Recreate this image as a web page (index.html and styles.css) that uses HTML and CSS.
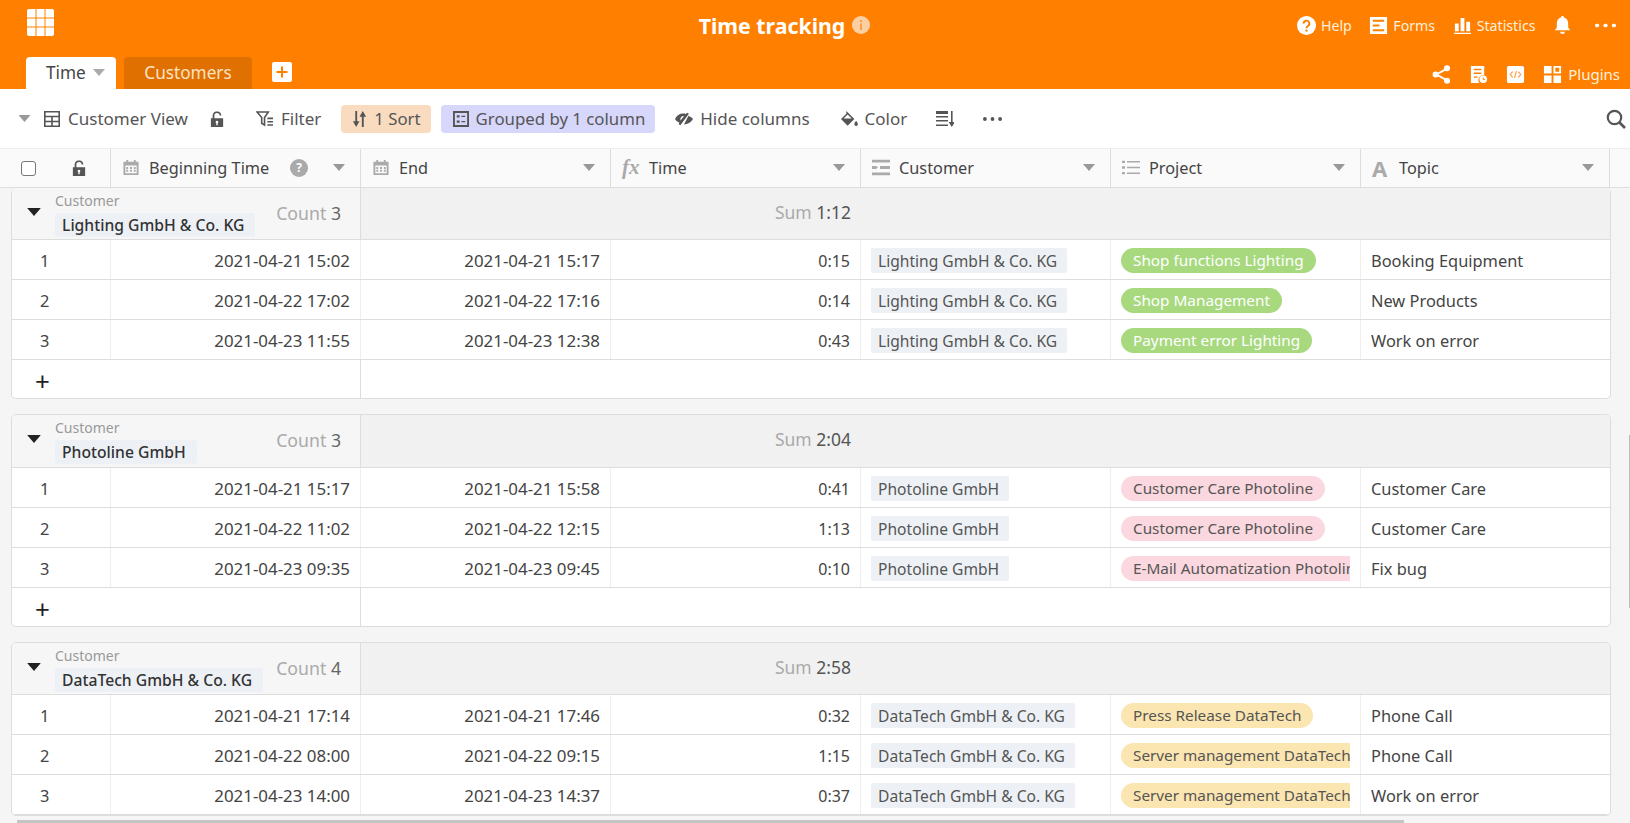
FILE: index.html
```html
<!DOCTYPE html>
<html lang="en">
<head>
  <meta charset="UTF-8">
  <meta name="viewport" content="width=device-width, initial-scale=1.0">
  <title>Time tracking</title>
  <link rel="stylesheet" href="styles.css">
</head>
<body>
  <svg class="sprite" xmlns="http://www.w3.org/2000/svg">
    <symbol id="i-cal" viewBox="0 0 18 18"><path fill="currentColor" d="M4 1h2v2h6V1h2v2h3v14H1V3h3zM3 7v8h12V7zm1 1.500h2v2H4zm4 0h2v2H8zm4 0h2v2h-2zm-8 3h2v2H4zm4 0h2v2H8zm4 0h2v2h-2z" fill-rule="evenodd"/></symbol>
    <symbol id="i-lock" viewBox="0 0 16 18"><path fill="currentColor" fill-rule="evenodd" d="M1 8h2V5a5 5 0 0 1 10 0H11a3 3 0 0 0-6 0v3h10v10H1zm7 3a1.500 1.500 0 0 0-.8 2.800V16h1.600v-2.200A1.500 1.500 0 0 0 8 11z"/></symbol>
    <symbol id="i-caret" viewBox="0 0 12 7"><path fill="currentColor" d="M0 0h12L6 7z"/></symbol>
    <symbol id="i-customer" viewBox="0 0 18 16"><path fill="currentColor" d="M0 0h18v3H0zM0 6.500h4L6 8 4 9.500H0zM8 6.500h10v3H8zM0 13h18v3H0z"/></symbol>
    <symbol id="i-list" viewBox="0 0 18 14"><path fill="currentColor" d="M0 0h3v2.500H0zM5 .5h13v1.500H5zM0 5.700h3v2.500H0zM5 6.200h13v1.500H5zM0 11.400h3v2.500H0zM5 11.900h13v1.500H5z"/></symbol>
    <symbol id="i-dots" viewBox="0 0 20 4"><circle cx="2" cy="2" r="2" fill="currentColor"/><circle cx="10" cy="2" r="2" fill="currentColor"/><circle cx="18" cy="2" r="2" fill="currentColor"/></symbol>
  </svg>

  <div id="page">
    <header class="app-head">
      <div class="top-row">
        <svg class="logo" viewBox="0 0 27 27"><path fill="#fff" d="M0 2a2 2 0 0 1 2-2h6.500v8.500H0zM9.500 0h8v8.500h-8zM18.500 0H25a2 2 0 0 1 2 2v6.500h-8.500zM0 9.500h8.500v8H0zM9.500 9.500h8v8h-8zM18.500 9.500H27v8h-8.500zM0 18.500h8.500V27H2a2 2 0 0 1-2-2zM9.500 18.500h8V27h-8zM18.500 18.500H27V25a2 2 0 0 1-2 2h-6.500z"/></svg>
        <div class="title">
          <span>Time tracking</span>
          <svg class="info" viewBox="0 0 18 18"><circle cx="9" cy="9" r="9" fill="#fbcfa4"/><path fill="#ff9c3d" d="M8 4h2v2H8zM8 7.500h2V14H8z"/></svg>
        </div>
        <nav class="top-links">
          <a class="top-link"><svg class="ico20" viewBox="0 0 20 20"><circle cx="10" cy="10" r="10" fill="#fff"/><path fill="none" stroke="#ff8000" stroke-width="2" d="M7 8a3 3 0 1 1 4.500 2.500c-1 .6-1.500 1-1.500 2.300"/><circle cx="10" cy="15.500" r="1.200" fill="#ff8000"/></svg>Help</a>
          <a class="top-link"><svg class="ico20" viewBox="0 0 20 20"><path fill="#fff" fill-rule="evenodd" d="M1 1h18v18H1zM4 4v2h12V4zm0 5v2h7V9zm0 5v2h12v-2z"/></svg>Forms</a>
          <a class="top-link"><svg class="ico20" viewBox="0 0 20 20"><path fill="#fff" d="M2 8h4v8H2zM8 2h4v14H8zM14 6h4v10h-4zM1 17.500h18V19H1z"/></svg>Statistics</a>
          <svg class="ico20 bell" viewBox="0 0 20 20"><path fill="#fff" d="M10 0a1.500 1.500 0 0 1 1.500 1.700C14.500 2.500 16 5 16 8v4l2 3H2l2-3V8c0-3 1.500-5.500 4.500-6.300A1.500 1.500 0 0 1 10 0zM7.500 16.500h5a2.500 2.500 0 0 1-5 0z"/></svg>
          <svg class="more" viewBox="0 0 20 4"><use href="#i-dots"/></svg>
        </nav>
      </div>
      <div class="tab-row">
        <div class="tab tab-active">Time<svg class="caret" viewBox="0 0 12 7"><use href="#i-caret"/></svg></div>
        <div class="tab tab-other">Customers</div>
        <div class="tab-add"><svg viewBox="0 0 20 20"><path fill="#ff8000" d="M9 4.500h2V9h4.500v2H11v4.500H9V11H4.500V9H9z"/></svg></div>
        <div class="tab-tools">
          <svg class="ico20" viewBox="0 0 20 20"><path fill="none" stroke="#fff" stroke-width="2" d="M15.500 4 4.500 10l11 6"/><circle cx="15.800" cy="3.500" r="3.200" fill="#fff"/><circle cx="3.800" cy="10" r="3.200" fill="#fff"/><circle cx="15.800" cy="16.500" r="3.200" fill="#fff"/></svg>
          <svg class="ico20" viewBox="0 0 20 20"><path fill="#fff" fill-rule="evenodd" d="M2 1h14v10a5 5 0 0 0-5 8H2zm3 3v1.500h8V4zm0 4v1.500h8V8zm0 4v1.500h4V12z"/><circle cx="15" cy="15" r="4" fill="#fff"/><path fill="none" stroke="#ff8000" stroke-width="1" d="M15 13v2.300h1.800"/></svg>
          <svg class="ico20" viewBox="0 0 20 20"><rect x="1" y="1" width="18" height="18" rx="2" fill="#fff"/><path fill="none" stroke="#ff9c3d" stroke-width="1.200" d="M7 7 4.500 10 7 13M13 7l2.500 3-2.500 3M11 6.500 9 13.500"/></svg>
          <a class="top-link"><svg class="ico20" viewBox="0 0 20 20"><path fill="#fff" fill-rule="evenodd" d="M1 1h8v8H1zM11 1h8v8h-8zm2 2v4h4V3zM1 11h8v8H1zM11 11h8v8h-8z"/></svg>Plugins</a>
        </div>
      </div>
    </header>

    <div class="toolbar">
      <svg class="tb-caret" viewBox="0 0 12 7"><use href="#i-caret"/></svg>
      <svg class="tb-table" viewBox="0 0 16 16"><path fill="none" stroke="currentColor" stroke-width="1.600" d="M.8.800h14.400v14.400H.8zM.8 5.500h14.400M.8 10.500h14.400M8 5.500v9.700"/></svg>
      <span class="tb-view">Customer View</span>
      <svg class="tb-lock" viewBox="0 0 16 18"><use href="#i-lock"/></svg>
      <span class="tb-item tb-filter"><svg class="tb-ico" viewBox="0 0 19 17"><path fill="none" stroke="currentColor" stroke-width="1.700" d="M1 1h12L9 7v8L6 13V7z"/><path fill="currentColor" d="M12 7h6v1.700h-6zM12 10.500h6v1.700h-6zM12 14h6v1.700h-6z"/></svg>Filter</span>
      <span class="tb-item tb-pill pill-sort"><svg class="tb-ico" viewBox="0 0 15 17"><path fill="currentColor" d="M3 0h2v11h2.500L4 17 .5 11H3zM10 17h2V6h2.500L11 0 7.500 6H10z"/></svg>1 Sort</span>
      <span class="tb-item tb-pill pill-group"><svg class="tb-ico" viewBox="0 0 17 17"><path fill="currentColor" fill-rule="evenodd" d="M0 0h17v17H0zm2 2v13h13V2zm2 2.500h3v2.500H4zm5 .5h4v1.500H9zm-5 5h3v2.500H4zm5 .5h4V12H9z"/></svg>Grouped by 1 column</span>
      <span class="tb-item tb-hide"><svg class="tb-ico" viewBox="0 0 20 14"><path fill="currentColor" fill-rule="evenodd" d="M0 7c2-4 5.500-6 9-6 1 0 2 .2 3 .5L13.500 0l2 1.200L6 14l-2-1.300 1-1.500C3 10.300 1 9 0 7zm10-3.200a3.500 3.500 0 0 0-3.800 4.800zM15 3.500c2 1 4 2 5 3.500-2 4-6 6-10 6z"/></svg>Hide columns</span>
      <span class="tb-item tb-color"><svg class="tb-ico" viewBox="0 0 20 18"><path fill="currentColor" fill-rule="evenodd" d="M7 0l1.500 1.500L16 9l-7.500 7.500L1 9l6-6zM8.500 4 4 8.500h9z"/><path fill="currentColor" d="M18 11c1 1.500 2 2.700 2 4a2 2 0 0 1-4 0c0-1.300 1-2.500 2-4z"/></svg>Color</span>
      <svg class="tb-rows" viewBox="0 0 18 16"><path fill="currentColor" d="M0 0h12v3H0zM0 5h12v1.600H0zM0 9h12v1.600H0zM0 13.400h12V15H0zM15 0h1.600v11H19l-3.200 5-3.200-5h2.400z"/></svg>
      <svg class="tb-dots" viewBox="0 0 20 4"><use href="#i-dots"/></svg>
      <svg class="tb-search" viewBox="0 0 20 20"><circle cx="8.500" cy="8.500" r="6.700" fill="none" stroke="currentColor" stroke-width="2.200"/><path stroke="currentColor" stroke-width="2.600" d="m13.500 13.500 5.500 5.500"/></svg>
    </div>

    <div class="col-head">
      <div class="ch-first"><span class="checkbox"></span><svg class="ch-lock" viewBox="0 0 16 18"><use href="#i-lock"/></svg></div>
      <div class="ch"><svg class="ch-ico" viewBox="0 0 18 18"><use href="#i-cal"/></svg><span class="ch-name">Beginning Time</span><span class="ch-help">?</span><svg class="caret" viewBox="0 0 12 7"><use href="#i-caret"/></svg></div>
      <div class="ch"><svg class="ch-ico" viewBox="0 0 18 18"><use href="#i-cal"/></svg><span class="ch-name">End</span><svg class="caret" viewBox="0 0 12 7"><use href="#i-caret"/></svg></div>
      <div class="ch"><i class="ch-fx">fx</i><span class="ch-name">Time</span><svg class="caret" viewBox="0 0 12 7"><use href="#i-caret"/></svg></div>
      <div class="ch"><svg class="ch-ico" viewBox="0 0 18 16"><use href="#i-customer"/></svg><span class="ch-name">Customer</span><svg class="caret" viewBox="0 0 12 7"><use href="#i-caret"/></svg></div>
      <div class="ch"><svg class="ch-ico" viewBox="0 0 18 14"><use href="#i-list"/></svg><span class="ch-name">Project</span><svg class="caret" viewBox="0 0 12 7"><use href="#i-caret"/></svg></div>
      <div class="ch"><b class="ch-a">A</b><span class="ch-name">Topic</span><svg class="caret" viewBox="0 0 12 7"><use href="#i-caret"/></svg></div>
    </div>

    <main class="groups">
      <section class="group">
        <div class="g-head">
          <div class="g-left">
            <svg class="g-caret" viewBox="0 0 12 7"><use href="#i-caret"/></svg>
            <div class="g-label"><small>Customer</small><span class="g-chip">Lighting GmbH &amp; Co. KG</span></div>
            <div class="g-count"><em>Count</em> 3</div>
          </div>
          <div class="g-sum"><em>Sum</em> 1:12</div>
        </div>
        <div class="row"><div class="c c-no">1</div><div class="c c-date">2021-04-21 15:02</div><div class="c c-date">2021-04-21 15:17</div><div class="c c-time">0:15</div><div class="c"><span class="chip">Lighting GmbH &amp; Co. KG</span></div><div class="c"><div class="clip"><span class="pill green">Shop functions Lighting</span></div></div><div class="c c-last">Booking Equipment</div></div>
        <div class="row"><div class="c c-no">2</div><div class="c c-date">2021-04-22 17:02</div><div class="c c-date">2021-04-22 17:16</div><div class="c c-time">0:14</div><div class="c"><span class="chip">Lighting GmbH &amp; Co. KG</span></div><div class="c"><div class="clip"><span class="pill green">Shop Management</span></div></div><div class="c c-last">New Products</div></div>
        <div class="row"><div class="c c-no">3</div><div class="c c-date">2021-04-23 11:55</div><div class="c c-date">2021-04-23 12:38</div><div class="c c-time">0:43</div><div class="c"><span class="chip">Lighting GmbH &amp; Co. KG</span></div><div class="c"><div class="clip"><span class="pill green">Payment error Lighting</span></div></div><div class="c c-last">Work on error</div></div>
        <div class="add-row"><div class="add-cell">+</div></div>
      </section>

      <section class="group group-tall">
        <div class="g-head">
          <div class="g-left">
            <svg class="g-caret" viewBox="0 0 12 7"><use href="#i-caret"/></svg>
            <div class="g-label"><small>Customer</small><span class="g-chip">Photoline GmbH</span></div>
            <div class="g-count"><em>Count</em> 3</div>
          </div>
          <div class="g-sum"><em>Sum</em> 2:04</div>
        </div>
        <div class="row"><div class="c c-no">1</div><div class="c c-date">2021-04-21 15:17</div><div class="c c-date">2021-04-21 15:58</div><div class="c c-time">0:41</div><div class="c"><span class="chip">Photoline GmbH</span></div><div class="c"><div class="clip"><span class="pill pink">Customer Care Photoline</span></div></div><div class="c c-last">Customer Care</div></div>
        <div class="row"><div class="c c-no">2</div><div class="c c-date">2021-04-22 11:02</div><div class="c c-date">2021-04-22 12:15</div><div class="c c-time">1:13</div><div class="c"><span class="chip">Photoline GmbH</span></div><div class="c"><div class="clip"><span class="pill pink">Customer Care Photoline</span></div></div><div class="c c-last">Customer Care</div></div>
        <div class="row"><div class="c c-no">3</div><div class="c c-date">2021-04-23 09:35</div><div class="c c-date">2021-04-23 09:45</div><div class="c c-time">0:10</div><div class="c"><span class="chip">Photoline GmbH</span></div><div class="c"><div class="clip"><span class="pill pink">E-Mail Automatization Photoline</span></div></div><div class="c c-last">Fix bug</div></div>
        <div class="add-row"><div class="add-cell">+</div></div>
      </section>

      <section class="group">
        <div class="g-head">
          <div class="g-left">
            <svg class="g-caret" viewBox="0 0 12 7"><use href="#i-caret"/></svg>
            <div class="g-label"><small>Customer</small><span class="g-chip">DataTech GmbH &amp; Co. KG</span></div>
            <div class="g-count"><em>Count</em> 4</div>
          </div>
          <div class="g-sum"><em>Sum</em> 2:58</div>
        </div>
        <div class="row"><div class="c c-no">1</div><div class="c c-date">2021-04-21 17:14</div><div class="c c-date">2021-04-21 17:46</div><div class="c c-time">0:32</div><div class="c"><span class="chip">DataTech GmbH &amp; Co. KG</span></div><div class="c"><div class="clip"><span class="pill yellow">Press Release DataTech</span></div></div><div class="c c-last">Phone Call</div></div>
        <div class="row"><div class="c c-no">2</div><div class="c c-date">2021-04-22 08:00</div><div class="c c-date">2021-04-22 09:15</div><div class="c c-time">1:15</div><div class="c"><span class="chip">DataTech GmbH &amp; Co. KG</span></div><div class="c"><div class="clip"><span class="pill yellow">Server management DataTech</span></div></div><div class="c c-last">Phone Call</div></div>
        <div class="row"><div class="c c-no">3</div><div class="c c-date">2021-04-23 14:00</div><div class="c c-date">2021-04-23 14:37</div><div class="c c-time">0:37</div><div class="c"><span class="chip">DataTech GmbH &amp; Co. KG</span></div><div class="c"><div class="clip"><span class="pill yellow">Server management DataTech</span></div></div><div class="c c-last">Work on error</div></div>
      </section>
    </main>

    <div class="scroll-x"></div>
    <div class="scroll-y"></div>
  </div>
</body>
</html>
```

FILE: styles.css
```css
* {
  box-sizing: border-box;
}

html, body {
  margin: 0;
  height: 100%;
  overflow: hidden;
}

body {
  font-family: "Noto Sans", "Open Sans", sans-serif;
  font-size: 16.400px;
  color: #444;
  background: #f5f5f5;
}

.sprite {
  display: none;
}

#page {
  position: relative;
  height: 823px;
  overflow: hidden;
}

/* orange header */
.app-head {
  height: 89px;
  background: #ff8000;
  color: #fff;
}

.top-row {
  height: 57px;
  display: grid;
  grid-template-columns: 1fr auto 1fr;
  padding: 9px 14px 0 27px;
}

.logo {
  width: 27px;
  height: 27px;
}

.title {
  display: flex;
  align-items: center;
  gap: 7px;
  height: 32px;
  margin-right: 74px;
  font-size: 21.300px;
  font-weight: 700;
}

.info {
  width: 18px;
  height: 18px;
}

.top-links {
  display: flex;
  justify-content: flex-end;
  align-items: center;
  height: 32px;
}

.top-link {
  display: flex;
  align-items: center;
  gap: 5px;
  font-size: 14.200px;
  color: #fff0de;
  margin-right: 17.500px;
}

.ico20 {
  width: 19px;
  height: 19px;
  flex: none;
}

.bell {
  margin-right: 23px;
}

.more {
  width: 21px;
  height: 5px;
  color: #fff;
}

.tab-row {
  height: 32px;
  display: flex;
  align-items: flex-end;
  padding-left: 26px;
}

.tab {
  height: 32px;
  display: flex;
  align-items: center;
  padding-bottom: 2px;
  border-radius: 4px 4px 0 0;
  font-size: 17.200px;
}

.tab-active {
  width: 90px;
  padding-left: 20px;
  background: #fff;
  color: #444;
}

.tab-active .caret {
  width: 12px;
  height: 7px;
  margin-left: 7px;
  color: #aaa;
}

.tab-other {
  width: 128px;
  margin-left: 8px;
  justify-content: center;
  background: #e07000;
  color: #fde3c4;
}

.tab-add {
  width: 20px;
  height: 20px;
  margin: 0 0 7px 20px;
  background: #fff;
  border-radius: 2px;
}

.tab-tools {
  margin-left: auto;
  height: 32px;
  padding-top: 2px;
  display: flex;
  align-items: center;
  gap: 18px;
}

.tab-tools .top-link {
  margin-right: 10px;
  font-size: 15px;
  gap: 6px;
}

/* toolbar */
.toolbar {
  height: 59px;
  display: flex;
  align-items: center;
  padding-left: 18px;
  font-size: 17px;
  background: #fff;
  color: #555;
}

.toolbar svg {
  flex: none;
}

.tb-caret {
  width: 13px;
  height: 7px;
  color: #999;
}

.tb-table {
  width: 16px;
  height: 16px;
  margin-left: 13px;
}

.tb-view {
  margin-left: 8px;
}

.tb-lock {
  width: 14px;
  height: 16px;
  margin-left: 22px;
}

.tb-item {
  display: flex;
  align-items: center;
  gap: 7px;
  height: 28px;
}

.tb-ico {
  width: 18px;
  height: 16px;
}

.tb-filter {
  margin-left: 32px;
}

.tb-pill {
  border-radius: 4px;
  padding: 0 10px 0 11px;
  font-size: 16.800px;
}

.pill-sort {
  margin-left: 20px;
  background: #f9dcc0;
}

.pill-sort .tb-ico {
  width: 15px;
}

.pill-group {
  margin-left: 10px;
  padding-left: 12px;
  background: #d7d6fb;
}

.pill-group .tb-ico {
  width: 16px;
}

.tb-hide {
  margin-left: 20px;
}

.tb-color {
  margin-left: 30px;
}

.tb-rows {
  width: 18px;
  height: 16px;
  margin-left: 29px;
}

.tb-dots {
  width: 19px;
  height: 4px;
  margin-left: 29px;
}

.tb-search {
  width: 20px;
  height: 20px;
  margin-left: auto;
  margin-right: 4px;
}

/* column header */
.col-head {
  height: 40px;
  display: flex;
  background: #fafafa;
  border-top: 1px solid #eee;
  border-bottom: 1px solid #ddd;
}

.ch-first {
  width: 111px;
  flex: none;
  display: flex;
  align-items: center;
  padding-left: 21px;
  border-right: 1px solid #ddd;
}

.checkbox {
  width: 15px;
  height: 15px;
  background: #fff;
  border: 1px solid #777;
  border-radius: 3px;
}

.ch-lock {
  width: 14px;
  height: 16px;
  margin-left: 36px;
  color: #555;
}

.ch {
  width: 250px;
  flex: none;
  display: flex;
  align-items: center;
  padding: 0 15px 1px 11px;
  font-size: 16.300px;
  border-right: 1px solid #ddd;
}

.ch:last-child {
  width: 249px;
  border-right: 1px solid #ddd;
}

.ch-ico {
  width: 18px;
  height: 17px;
  color: #aaa;
}

.ch-fx {
  width: 18px;
  font-family: "Liberation Serif", serif;
  font-size: 21px;
  font-weight: 700;
  line-height: 1;
  color: #aaa;
}

.ch-a {
  width: 18px;
  font-size: 22px;
  line-height: 1;
  color: #aaa;
}

.ch-name {
  margin-left: 9px;
  flex: 1;
}

.ch-help {
  width: 18px;
  height: 18px;
  margin-right: 25px;
  border-radius: 50%;
  background: #aaa;
  color: #fff;
  font-size: 12px;
  font-weight: 700;
  line-height: 18px;
  text-align: center;
}

.ch .caret {
  width: 12px;
  height: 7px;
  color: #999;
}

/* groups */
.groups {
  padding: 0 19px 0 11px;
}

.group {
  margin-bottom: 15px;
  background: #fff;
  border: 1px solid #ddd;
  border-top: 0;
  border-radius: 5px;
  overflow: hidden;
}

.group + .group {
  border-top: 1px solid #ddd;
}

.g-head {
  height: 52px;
  display: flex;
  background: #f1f1f1;
  border-bottom: 1px solid #ddd;
}

.group-tall .g-head {
  height: 53px;
}

.g-left {
  width: 349px;
  flex: none;
  display: flex;
  align-items: center;
  padding-left: 15px;
  background: #f6f6f6;
  border-right: 1px solid #ddd;
}

.g-caret {
  width: 14px;
  height: 8px;
  margin-top: -4px;
  color: #222;
  flex: none;
}

.g-label {
  margin-left: 14px;
  width: 215px;
  align-self: flex-start;
}

.g-label small {
  display: block;
  margin-top: 4px;
  font-size: 14px;
  line-height: 18px;
  color: #999;
}

.g-chip {
  display: inline-block;
  margin-top: 3px;
  padding: 0 11px 0 7px;
  height: 24px;
  line-height: 24px;
  font-size: 15.700px;
  font-weight: 500;
  white-space: nowrap;
  color: #333;
  background: #edf1f6;
  border-radius: 2px;
}

.g-count {
  flex: 1;
  padding: 0 19px 2px 0;
  text-align: right;
  font-size: 17.700px;
  color: #666;
  white-space: nowrap;
}

.g-sum {
  width: 500px;
  line-height: 48px;
  padding-right: 10px;
  text-align: right;
  font-size: 17.500px;
  color: #555;
}

.g-count em, .g-sum em {
  font-style: normal;
  color: #aaa;
}

.row {
  height: 40px;
  display: flex;
  border-bottom: 1px solid #ddd;
}

.c {
  width: 250px;
  flex: none;
  display: flex;
  align-items: center;
  padding: 2px 10px 0;
  border-right: 1px solid #eee;
  white-space: nowrap;
}

.c-no {
  width: 99px;
  padding-left: 28px;
}

.c-date {
  justify-content: flex-end;
  font-size: 16.900px;
}

.c-time {
  justify-content: flex-end;
  font-size: 16px;
}

.c-last {
  flex: 1;
  padding-top: 1px;
  border-right: 0;
}

.chip {
  padding: 0 10px 0 7px;
  height: 25px;
  line-height: 26px;
  font-size: 15.600px;
  color: #555;
  background: #edf1f6;
  border-radius: 2px;
}

.clip {
  width: 230px;
  overflow: hidden;
  display: flex;
}

.pill {
  flex: none;
  height: 25px;
  line-height: 25px;
  padding: 0 12px;
  border-radius: 13px;
  font-size: 15.300px;
}

.green {
  background: #a8d97f;
  color: #fff;
}

.pink {
  background: #fbd8df;
  color: #555;
}

.yellow {
  background: #fbe5b0;
  color: #555;
}

.add-row {
  height: 38px;
}

.add-cell {
  width: 349px;
  height: 38px;
  padding: 4px 0 0 23px;
  font-size: 26px;
  line-height: 34px;
  color: #222;
  border-right: 1px solid #ddd;
}

.scroll-x {
  position: absolute;
  left: 17px;
  bottom: 0;
  width: 1387px;
  height: 3px;
  background: #c4c4c4;
}

.scroll-y {
  position: absolute;
  right: 0;
  top: 435px;
  width: 1px;
  height: 173px;
  background: #bbb;
}
```
